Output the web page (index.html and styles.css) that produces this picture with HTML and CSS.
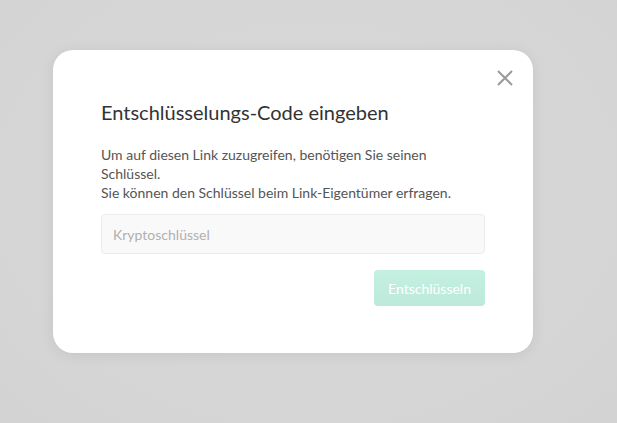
FILE: index.html
```html
<!DOCTYPE html>
<html lang="de">
<head>
    <meta charset="UTF-8">
    <meta name="viewport" content="width=device-width, initial-scale=1.0">
    <title>Entschlüsseln</title>
    <link rel="stylesheet" href="styles.css">
</head>
<body>
    <div class="modal">
        <button class="close" type="button" aria-label="Schließen">
            <svg width="16" height="16" viewBox="0 0 16 16">
                <path d="M1 1 L15 15 M15 1 L1 15" stroke="#9a9a9a" stroke-width="2" fill="none"/>
            </svg>
        </button>
        <h1>Entschlüsselungs-Code eingeben</h1>
        <p>Um auf diesen Link zuzugreifen, benötigen Sie seinen Schlüssel.<br>
        Sie können den Schlüssel beim Link-Eigentümer erfragen.</p>
        <input type="text" class="key" placeholder="Kryptoschlüssel">
        <div class="actions">
            <button type="button" class="decrypt" disabled>Entschlüsseln</button>
        </div>
    </div>
</body>
</html>
```

FILE: styles.css
```css
body {
    margin: 0;
    min-height: 100vh;
    background: radial-gradient(ellipse at 50% 45%, #dadada 0%, #d6d6d6 60%, #d3d3d3 100%);
    font-family: Lato, "Open Sans", sans-serif;
    padding: 50px 0 0 53px;
    box-sizing: border-box;
}

.modal {
    position: relative;
    width: 480px;
    box-sizing: border-box;
    background: #fff;
    border-radius: 20px;
    padding: 50px 48px 47px;
    box-shadow: 0 2px 14px rgba(0, 0, 0, 0.08);
}

.close {
    position: absolute;
    top: 20px;
    right: 20px;
    background: none;
    border: none;
    padding: 0;
    width: 16px;
    height: 16px;
    cursor: pointer;
}

.close svg {
    display: block;
}

h1 {
    margin: 0 0 21px;
    font-size: 20px;
    line-height: 24px;
    font-weight: 400;
    color: #333;
}

p {
    margin: 0 0 12px;
    font-size: 14px;
    line-height: 19px;
    color: #555;
}

.key {
    display: block;
    width: 100%;
    box-sizing: border-box;
    height: 40px;
    padding: 0 11px;
    border: 1px solid #ececec;
    border-radius: 4px;
    background: #f9f9f9;
    font-family: inherit;
    font-size: 14px;
    color: #333;
    outline: none;
}

.key::placeholder {
    color: #b0b0b0;
}

.actions {
    display: flex;
    justify-content: flex-end;
    margin-top: 16px;
}

.decrypt {
    height: 36px;
    width: 111px;
    border: none;
    border-radius: 4px;
    background: linear-gradient(#c4f0e2, #bce9da);
    color: #fff;
    font-family: inherit;
    font-size: 14px;
    padding: 0;
}
```
